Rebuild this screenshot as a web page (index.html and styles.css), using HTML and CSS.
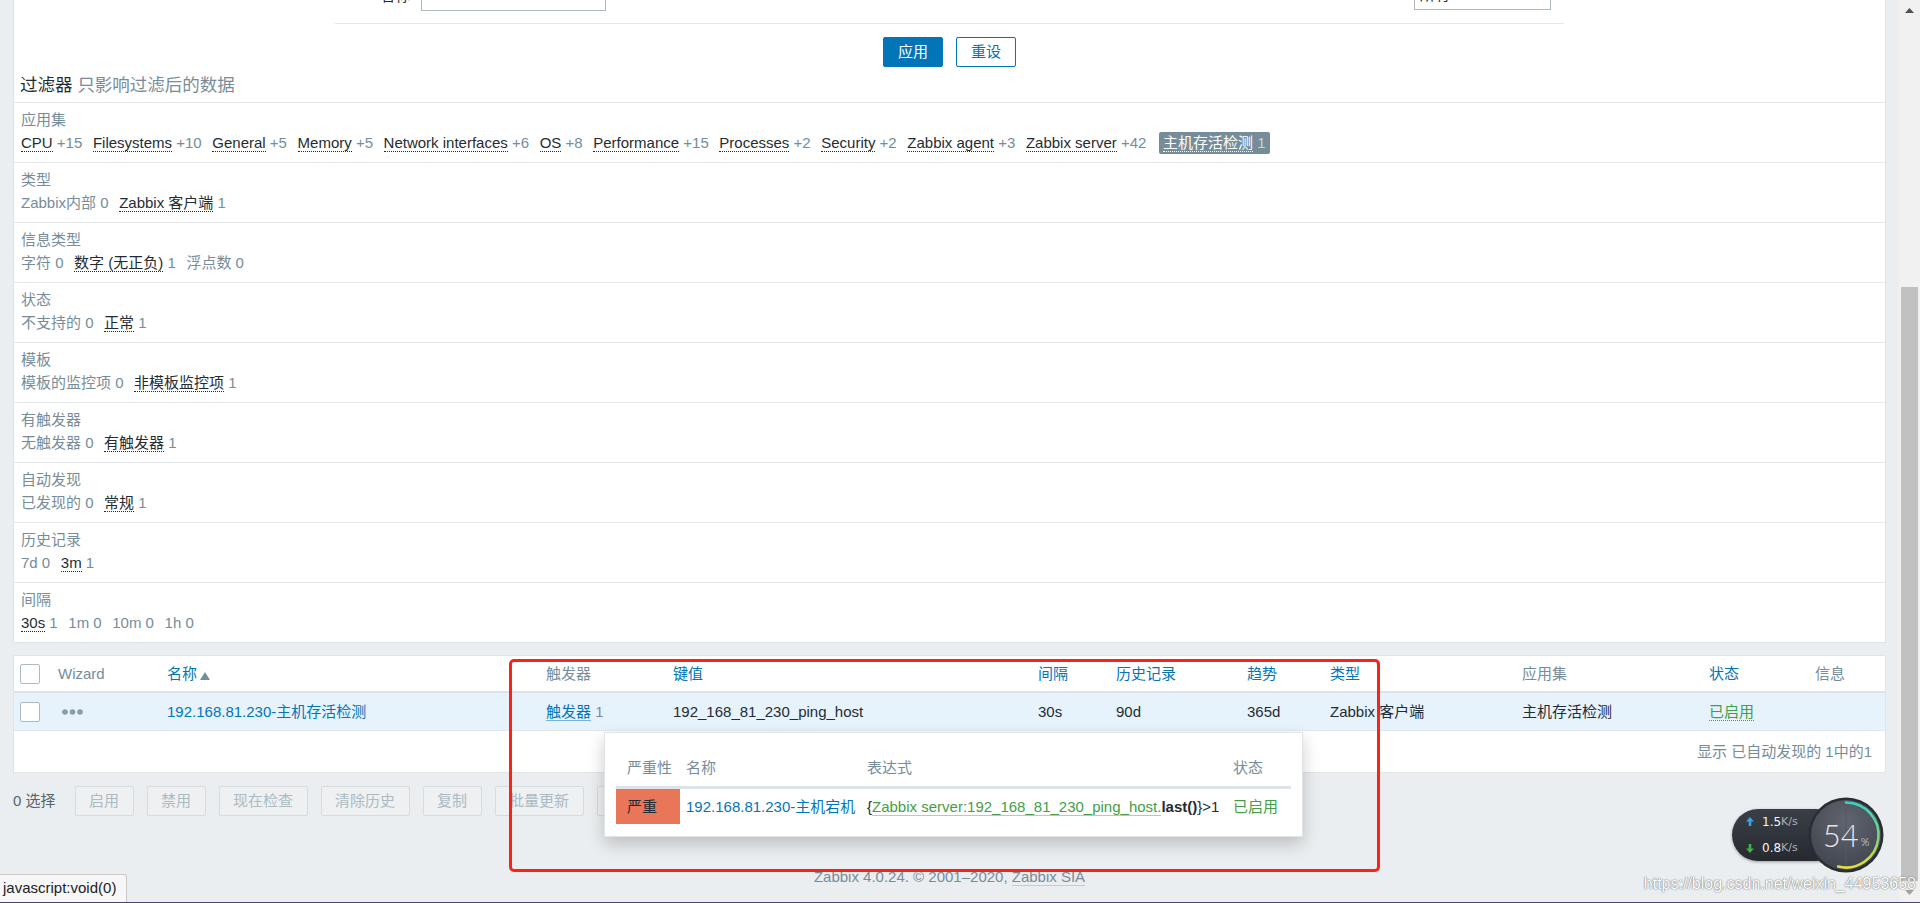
FILE: index.html
```html
<!DOCTYPE html>
<html lang="zh">
<head>
<meta charset="utf-8">
<title>Zabbix 监控项</title>
<link rel="stylesheet" href="styles.css">
</head>
<body>
<div class="screen">
  <div class="main">
    <div class="panel filter-panel">
      <div class="form-area">
        <span class="form-label">名称</span>
        <div class="input input-left"></div>
        <div class="input input-right">所有</div>
      </div>
      <div class="form-buttons">
        <button class="btn btn-primary">应用</button>
        <button class="btn btn-alt">重设</button>
      </div>
      <h3 class="filter-title">过滤器 <span class="muted">只影响过滤后的数据</span></h3>

      <div class="subfilter">
        <div class="sf-label">应用集</div>
        <div class="sf-values">
          <span class="sf-item"><a class="sf-link">CPU</a> <span class="cnt">+15</span></span>
          <span class="sf-item"><a class="sf-link">Filesystems</a> <span class="cnt">+10</span></span>
          <span class="sf-item"><a class="sf-link">General</a> <span class="cnt">+5</span></span>
          <span class="sf-item"><a class="sf-link">Memory</a> <span class="cnt">+5</span></span>
          <span class="sf-item"><a class="sf-link">Network interfaces</a> <span class="cnt">+6</span></span>
          <span class="sf-item"><a class="sf-link">OS</a> <span class="cnt">+8</span></span>
          <span class="sf-item"><a class="sf-link">Performance</a> <span class="cnt">+15</span></span>
          <span class="sf-item"><a class="sf-link">Processes</a> <span class="cnt">+2</span></span>
          <span class="sf-item"><a class="sf-link">Security</a> <span class="cnt">+2</span></span>
          <span class="sf-item"><a class="sf-link">Zabbix agent</a> <span class="cnt">+3</span></span>
          <span class="sf-item"><a class="sf-link">Zabbix server</a> <span class="cnt">+42</span></span>
          <span class="sf-item sf-sel"><a class="sf-link">主机存活检测</a> <span class="cnt">1</span></span>
        </div>
      </div>

      <div class="subfilter">
        <div class="sf-label">类型</div>
        <div class="sf-values">
          <span class="sf-item muted">Zabbix内部 0</span>
          <span class="sf-item"><a class="sf-link">Zabbix 客户端</a> <span class="cnt">1</span></span>
        </div>
      </div>

      <div class="subfilter">
        <div class="sf-label">信息类型</div>
        <div class="sf-values">
          <span class="sf-item muted">字符 0</span>
          <span class="sf-item"><a class="sf-link">数字 (无正负)</a> <span class="cnt">1</span></span>
          <span class="sf-item muted">浮点数 0</span>
        </div>
      </div>

      <div class="subfilter">
        <div class="sf-label">状态</div>
        <div class="sf-values">
          <span class="sf-item muted">不支持的 0</span>
          <span class="sf-item"><a class="sf-link">正常</a> <span class="cnt">1</span></span>
        </div>
      </div>

      <div class="subfilter">
        <div class="sf-label">模板</div>
        <div class="sf-values">
          <span class="sf-item muted">模板的监控项 0</span>
          <span class="sf-item"><a class="sf-link">非模板监控项</a> <span class="cnt">1</span></span>
        </div>
      </div>

      <div class="subfilter">
        <div class="sf-label">有触发器</div>
        <div class="sf-values">
          <span class="sf-item muted">无触发器 0</span>
          <span class="sf-item"><a class="sf-link">有触发器</a> <span class="cnt">1</span></span>
        </div>
      </div>

      <div class="subfilter">
        <div class="sf-label">自动发现</div>
        <div class="sf-values">
          <span class="sf-item muted">已发现的 0</span>
          <span class="sf-item"><a class="sf-link">常规</a> <span class="cnt">1</span></span>
        </div>
      </div>

      <div class="subfilter">
        <div class="sf-label">历史记录</div>
        <div class="sf-values">
          <span class="sf-item muted">7d 0</span>
          <span class="sf-item"><a class="sf-link">3m</a> <span class="cnt">1</span></span>
        </div>
      </div>

      <div class="subfilter">
        <div class="sf-label">间隔</div>
        <div class="sf-values">
          <span class="sf-item"><a class="sf-link">30s</a> <span class="cnt">1</span></span>
          <span class="sf-item muted">1m 0</span>
          <span class="sf-item muted">10m 0</span>
          <span class="sf-item muted">1h 0</span>
        </div>
      </div>
    </div>

    <div class="panel table-panel">
      <div class="grid thead">
        <div><span class="cb"></span></div>
        <div class="c-gray">Wizard</div>
        <div class="c-blue">名称<svg class="sort" width="10" height="8" viewBox="0 0 10 8"><polygon points="0,8 5,0 10,8" fill="#768d99"/></svg></div>
        <div class="c-gray">触发器</div>
        <div class="c-blue">键值</div>
        <div class="c-blue">间隔</div>
        <div class="c-blue">历史记录</div>
        <div class="c-blue">趋势</div>
        <div class="c-blue">类型</div>
        <div class="c-gray">应用集</div>
        <div class="c-blue">状态</div>
        <div class="c-gray">信息</div>
      </div>
      <div class="grid trow">
        <div><span class="cb"></span></div>
        <div><svg class="dots" width="22" height="6" viewBox="0 0 22 6"><circle cx="3" cy="3" r="2.8" fill="#8a9ca6"/><circle cx="10.5" cy="3" r="2.8" fill="#8a9ca6"/><circle cx="18" cy="3" r="2.8" fill="#8a9ca6"/></svg></div>
        <div><a class="c-blue">192.168.81.230-主机存活检测</a></div>
        <div><a class="trig">触发器</a> <span class="cnt">1</span></div>
        <div>192_168_81_230_ping_host</div>
        <div>30s</div>
        <div>90d</div>
        <div>365d</div>
        <div>Zabbix 客户端</div>
        <div>主机存活检测</div>
        <div><a class="enabled">已启用</a></div>
        <div></div>
      </div>
      <div class="table-footer">显示 已自动发现的 1中的1</div>
    </div>

    <div class="action-bar">
      <span class="sel-count">0 选择</span>
      <button class="btn btn-dis">启用</button>
      <button class="btn btn-dis">禁用</button>
      <button class="btn btn-dis">现在检查</button>
      <button class="btn btn-dis">清除历史</button>
      <button class="btn btn-dis">复制</button>
      <button class="btn btn-dis">批量更新</button>
      <button class="btn btn-dis">删除</button>
    </div>

    <div class="page-footer">Zabbix 4.0.24. © 2001–2020, <a class="sia">Zabbix SIA</a></div>
  </div>

  <div class="scrollbar">
    <div class="sb-btn"><svg width="9" height="5" viewBox="0 0 9 5"><polygon points="0,5 4.5,0 9,5" fill="#505050"/></svg></div>
    <div class="sb-track"><div class="sb-thumb"></div></div>
    <div class="sb-btn"><svg width="9" height="5" viewBox="0 0 9 5"><polygon points="0,0 4.5,5 9,0" fill="#a3a3a3"/></svg></div>
  </div>
</div>

<div class="hintbox">
  <div class="hint-grid hint-head">
    <div>严重性</div><div>名称</div><div>表达式</div><div>状态</div>
  </div>
  <div class="hint-grid hint-row">
    <div class="sev">严重</div>
    <div class="c-blue">192.168.81.230-主机宕机</div>
    <div class="expr">{<span class="expr-host">Zabbix server:192_168_81_230_ping_host.</span><b>last()</b>}&gt;1</div>
    <div class="c-green">已启用</div>
  </div>
</div>

<div class="highlight"></div>

<div class="netmeter">
  <div class="nm-pill">
    <div class="nm-row"><svg width="8" height="9" viewBox="0 0 8 9"><polygon points="4,0 8,4.5 5.3,4.5 5.3,9 2.7,9 2.7,4.5 0,4.5" fill="#39a5e6"/></svg><span class="nm-num">1.5</span><span class="nm-unit">K/s</span></div>
    <div class="nm-row"><svg width="8" height="9" viewBox="0 0 8 9"><polygon points="4,9 8,4.5 5.3,4.5 5.3,0 2.7,0 2.7,4.5 0,4.5" fill="#3fb34a"/></svg><span class="nm-num">0.8</span><span class="nm-unit">K/s</span></div>
  </div>
  <div class="nm-dial">
    <svg width="76" height="76" viewBox="0 0 76 76">
      <defs>
        <radialGradient id="face" cx="50%" cy="30%" r="70%">
          <stop offset="0" stop-color="#60656f"/>
          <stop offset="1" stop-color="#42464f"/>
        </radialGradient>
        <linearGradient id="arcg" x1="0" y1="4" x2="0" y2="72" gradientUnits="userSpaceOnUse">
          <stop offset="0" stop-color="#33d3c8"/>
          <stop offset="0.55" stop-color="#7fd27a"/>
          <stop offset="1" stop-color="#ece03a"/>
        </linearGradient>
      </defs>
      <circle cx="38" cy="38" r="37.5" fill="#2a2d33"/>
      <circle cx="38" cy="38" r="35" fill="url(#face)"/>
      <line x1="38" y1="8" x2="38" y2="68" stroke="#555a64" stroke-width="1"/>
      <path d="M38 5.5 A32.5 32.5 0 1 1 30.14 69.53" fill="none" stroke="url(#arcg)" stroke-width="2.6" stroke-linecap="round"/>
    </svg>
    <div class="nm-val">54<span class="nm-pct">%</span></div>
  </div>
</div>

<div class="watermark">https://blog.csdn.net/weixin_44953658</div>
<div class="statusbar">javascript:void(0)</div>
<div class="taskbar-edge"></div>
</body>
</html>
```

FILE: styles.css
```css
* { box-sizing: border-box; }
html, body { margin: 0; padding: 0; }
body {
  width: 1920px;
  height: 903px;
  overflow: hidden;
  position: relative;
  background: #ebeef0;
  font-family: "Liberation Sans", "Noto Sans CJK SC", sans-serif;
  font-size: 15px;
  line-height: 20px;
  color: #1f2c33;
}
a { text-decoration: none; color: inherit; cursor: pointer; }
button { font-family: inherit; font-size: 15px; }

.screen { display: flex; height: 903px; }
.main { flex: 1; min-width: 0; padding: 0 13px; }

.panel { background: #fff; border: 1px solid #dfe4e7; }
.filter-panel { border-top: none; }

/* form (cut off at top) */
.form-area {
  width: 1229px;
  height: 24px;
  margin: 0 auto;
  border-bottom: 1px solid #e4e8eb;
  display: flex;
  align-items: flex-end;
  padding: 0 13px 0 45px;
}
.form-label { width: 30px; line-height: 15px; margin-bottom: 20px; color: #1f2c33; }
.input { height: 30px; border: 1px solid #acbbc2; background: #fff; flex: none; }
.input-left { width: 185px; margin-left: 11px; margin-bottom: 12px; }
.input-right { width: 137px; margin-left: auto; margin-bottom: 13px; padding: 0 5px; line-height: 28px; }

.form-buttons { display: flex; justify-content: center; gap: 13px; margin-top: 13px; }
.btn {
  height: 30px;
  padding: 0 14px;
  border-radius: 2px;
  border: 1px solid #0275b8;
  line-height: 28px;
}
.btn-primary { background: #0275b8; color: #fff; }
.btn-alt { background: #fff; color: #0275b8; }

.filter-title {
  margin: 7px 0 0;
  padding: 0 6px 6px;
  font-size: 17.5px;
  line-height: 22px;
  font-weight: normal;
  color: #1f2c33;
}
.muted { color: #768d99; }

/* subfilters */
.subfilter { border-top: 1px solid #e6e9ec; padding: 7px 7px 6px; }
.sf-label { line-height: 20px; color: #768d99; }
.sf-values { height: 26px; display: flex; align-items: center; gap: 10.6px; white-space: nowrap; }
.sf-link { color: #1f2c33; border-bottom: 1px dotted #1f2c33; }
.cnt { color: #768d99; }
.sf-sel {
  background: #768d99;
  color: #fff;
  padding: 0 4px;
  border-radius: 2px;
  line-height: 22px;
  margin-left: 2px;
}
.sf-sel .sf-link { color: #fff; border-bottom-color: #fff; }
.sf-sel .cnt { color: #c9d2d7; }

/* table */
.table-panel { margin-top: 12px; }
.grid {
  display: grid;
  grid-template-columns: 44px 109px 379px 127px 365px 78px 131px 83px 192px 187px 106px 1fr;
  align-items: center;
  white-space: nowrap;
}
.thead { height: 37px; border-bottom: 2px solid #dde3e7; }
.trow { height: 38px; background: #e6f3fd; border-bottom: 1px solid #e3e8eb; }
.cb {
  display: block;
  width: 20px;
  height: 20px;
  margin-left: 6px;
  border: 1px solid #acbbc2;
  border-radius: 2px;
  background: #fff;
}
.c-gray { color: #768d99; }
.c-blue { color: #0275b8; }
.c-green { color: #429e47; }
.sort { margin-left: 3px; vertical-align: -1px; }
.dots { display: block; margin-left: 4px; }
.trig { color: #0275b8; border-bottom: 1px solid rgba(2, 117, 184, 0.5); }
.enabled { color: #429e47; border-bottom: 1px dotted #429e47; }
.table-footer { height: 41px; line-height: 41px; text-align: right; padding-right: 13px; color: #768d99; }

/* action bar */
.action-bar { margin-top: 13px; height: 30px; display: flex; align-items: center; gap: 13px; }
.sel-count { color: #56636b; margin-right: 6px; }
.btn-dis {
  padding: 0 13.5px;
  background: #eef0f2;
  border: 1px solid #d5dbdf;
  color: #acbbc2;
}

.page-footer { margin-top: 51px; text-align: center; color: #768d99; line-height: 20px; }
.sia { border-bottom: 1px solid #c3ccd1; }

/* fake scrollbar */
.scrollbar { width: 21px; flex: none; background: #f1f1f1; display: flex; flex-direction: column; }
.sb-btn { height: 21px; flex: none; display: flex; align-items: center; justify-content: center; }
.sb-track { flex: 1; padding-top: 266px; }
.sb-thumb { height: 594px; margin: 0 2px; background: #c1c1c1; }

/* hint box popup */
.hintbox {
  position: absolute;
  left: 604px;
  top: 732px;
  width: 699px;
  height: 105px;
  background: #fff;
  border: 1px solid #dfe4e7;
  padding: 0 11px;
  box-shadow: 0 7px 16px rgba(0, 0, 0, 0.2);
  white-space: nowrap;
}
.hint-grid { display: grid; grid-template-columns: 64px 181px 366px 1fr; }
.hint-grid > div { padding-left: 6px; }
.hint-grid > div:first-child { padding-left: 11px; }
.hint-head {
  padding-top: 25px;
  padding-bottom: 8px;
  line-height: 20px;
  color: #768d99;
  border-bottom: 3px solid #dde3e7;
}
.hint-row { height: 35px; }
.hint-row > div { line-height: 35px; height: 35px; }
.sev { background: #e97659; color: #1f2c33; }
.expr-host { color: #429e47; border-bottom: 1px solid #b9c5cb; }
.expr b { font-weight: bold; }

/* red annotation box */
.highlight {
  position: absolute;
  left: 509px;
  top: 659px;
  width: 871px;
  height: 213px;
  border: 3px solid #fb2218;
  border-radius: 5px;
}

/* network meter widget */
.netmeter { position: absolute; left: 1732px; top: 797px; display: flex; align-items: center; }
.nm-pill {
  width: 110px;
  height: 52px;
  margin-right: -34px;
  border-radius: 26px;
  background: linear-gradient(#3a3e46, #262a30);
  box-shadow: 0 1px 3px rgba(0, 0, 0, 0.35);
  padding: 0 0 0 14px;
  display: flex;
  flex-direction: column;
}
.nm-row {
  height: 26px;
  display: flex;
  align-items: center;
  font-family: "DejaVu Sans", sans-serif;
}
.nm-row:first-child { border-bottom: 1px solid #33373e; }
.nm-row svg { margin-right: 8px; }
.nm-num { font-size: 12px; color: #f2f4f6; }
.nm-unit { font-size: 11px; color: #a9afb9; }
.nm-dial { position: relative; width: 76px; height: 76px; flex: none; }
.nm-dial svg { display: block; }
.nm-val {
  position: absolute;
  left: 0;
  top: 0;
  width: 76px;
  height: 76px;
  display: flex;
  align-items: center;
  justify-content: center;
  font-family: "Lato", "Liberation Sans", sans-serif;
  font-weight: 300;
  font-size: 31px;
  color: #e6e8ec;
  line-height: 1;
}
.nm-pct { font-size: 11px; margin-left: 2px; margin-top: 12px; }

.watermark {
  position: absolute;
  right: 4px;
  top: 874px;
  font-size: 16px;
  line-height: 20px;
  color: #ffffff;
  text-shadow: 0 0 1px rgba(40, 40, 40, 0.7), 0 0 2px rgba(60, 60, 60, 0.4);
  white-space: nowrap;
}

.statusbar {
  position: absolute;
  left: 0;
  bottom: 1px;
  width: 127px;
  height: 28px;
  padding-left: 3px;
  background: #f7f7f7;
  border-top: 1px solid #c9c9c9;
  border-right: 1px solid #c9c9c9;
  border-top-right-radius: 3px;
  line-height: 26px;
  color: #222;
  white-space: nowrap;
}
.taskbar-edge { position: absolute; left: 0; right: 0; bottom: 0; height: 1px; background: #4d4569; }
```
